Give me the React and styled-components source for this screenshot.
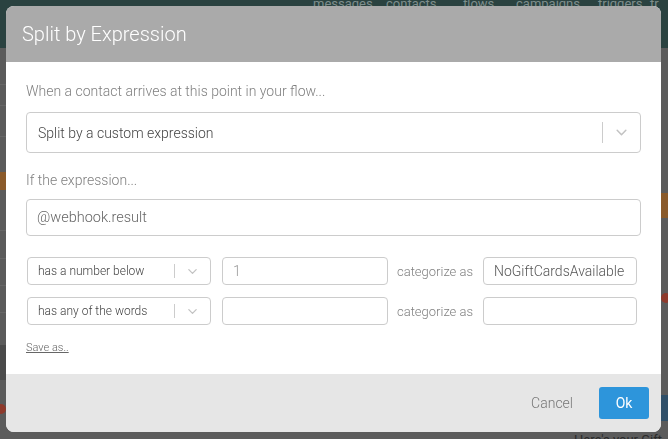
import React from 'react'
import styled, { createGlobalStyle } from 'styled-components'

const GlobalStyle = createGlobalStyle`
html, body{
    margin: 0;
    padding: 0;
    width: 668px;
    height: 439px;
    overflow: hidden;
    background: #5b5b5b;
    font-family: Roboto, "Liberation Sans", sans-serif;
}
*{
    box-sizing: border-box;
}
`

const rules = [
    { test: 'has a number below', value: '1', category: 'NoGiftCardsAvailable' },
    { test: 'has any of the words', value: '', category: '' },
]

const Chevron = ({ size = 12 }) => (
    <svg width={size} height={size} viewBox="0 0 12 12" fill="none">
        <path d="M2 4 L6 8 L10 4" stroke="#c2c2c2" strokeWidth="1.4" strokeLinecap="round" strokeLinejoin="round" />
    </svg>
)

const App = () => {
    return (
        <>
            <GlobalStyle />
            <Page>
                <TopBar>
                    <NavItem w={73}>messages</NavItem>
                    <NavItem w={77}>contacts</NavItem>
                    <NavItem w={53}>flows</NavItem>
                    <NavItem w={82}>campaigns</NavItem>
                    <NavItem w={52}>triggers</NavItem>
                    <NavItem w={20}>tr</NavItem>
                </TopBar>
                <Behind>
                    <SideColumn>
                        <Line top={36} />
                        <Line top={20} />
                        <Line top={30} />
                        <Tag top={35} h={18} color="#8a5a2a" />
                        <Line top={40} />
                        <Line top={27} />
                        <Line top={26} />
                        <Line top={26} />
                        <DarkBlock top={32} />
                        <Dot top={24} left={-4} />
                    </SideColumn>
                    <SideColumn>
                        <Tag top={145} color="#8a5a2a" h={25} />
                        <Dot top={75} left={0} />
                        <BlueBlock top={92} />
                    </SideColumn>
                </Behind>
                <FooterText>Here's your Gift</FooterText>
            </Page>

            <Overlay>
                <Modal>
                    <Header>
                        <Title>Split by Expression</Title>
                    </Header>
                    <Body>
                        <Label>When a contact arrives at this point in your flow...</Label>
                        <SelectBox>
                            <SelectValue>Split by a custom expression</SelectValue>
                            <Separator h={21} />
                            <ChevronWrap w={37}><Chevron size={13} /></ChevronWrap>
                        </SelectBox>
                        <Label top={19}>If the expression...</Label>
                        <ExpressionInput>@webhook.result</ExpressionInput>
                        <Rules>
                            {rules.map((rule, i) => (
                                <RuleRow key={i}>
                                    <RuleSelect>
                                        <RuleSelectValue>{rule.test}</RuleSelectValue>
                                        <Separator h={14} />
                                        <ChevronWrap w={35}><Chevron size={11} /></ChevronWrap>
                                    </RuleSelect>
                                    <ValueInput>{rule.value}</ValueInput>
                                    <CategorizeLabel>categorize as</CategorizeLabel>
                                    <CategoryInput>{rule.category}</CategoryInput>
                                </RuleRow>
                            ))}
                        </Rules>
                        <SaveAs>Save as..</SaveAs>
                    </Body>
                    <Footer>
                        <CancelButton>Cancel</CancelButton>
                        <OkButton>Ok</OkButton>
                    </Footer>
                </Modal>
            </Overlay>
        </>
    )
}

const Page = styled.div`
width: 668px;
height: 439px;
display: flex;
flex-direction: column;
background: #5b5b5b;
`
const TopBar = styled.div`
height: 48px;
background: #2a4240;
display: flex;
padding-left: 313px;
`
const NavItem = styled.div`
width: ${p => p.w}px;
flex-shrink: 0;
color: #7e8e8c;
font-size: 13px;
line-height: 13px;
margin-top: -3px;
`
const Behind = styled.div`
flex: 1;
display: flex;
justify-content: space-between;
`
const SideColumn = styled.div`
width: 7px;
display: flex;
flex-direction: column;
`
const Line = styled.div`
height: 1px;
margin-top: ${p => p.top}px;
background: #666666;
`
const Tag = styled.div`
height: ${p => p.h || 12}px;
margin-top: ${p => p.top}px;
background: ${p => p.color};
`
const DarkBlock = styled.div`
height: 35px;
margin-top: ${p => p.top}px;
background: #4a4a4a;
`
const Dot = styled.div`
width: 10px;
height: 10px;
border-radius: 50%;
margin-top: ${p => p.top}px;
margin-left: ${p => p.left}px;
background: #8e3a2c;
`
const BlueBlock = styled.div`
height: 26px;
margin-top: ${p => p.top}px;
background: #2f4f68;
`
const FooterText = styled.div`
position: absolute;
left: 574px;
top: 432px;
color: #2a2a2a;
font-size: 13px;
`
const Overlay = styled.div`
position: fixed;
inset: 0;
padding: 6px 7px 0 6px;
`
const Modal = styled.div`
width: 655px;
height: 426px;
border-radius: 8px;
overflow: hidden;
background: #ffffff;
display: flex;
flex-direction: column;
`
const Header = styled.div`
height: 56px;
flex-shrink: 0;
background: #aaaaaa;
display: flex;
align-items: center;
padding-left: 16px;
`
const Title = styled.div`
color: #ffffff;
font-size: 20px;
font-weight: 300;
`
const Body = styled.div`
flex: 1;
padding: 21px 20px 0 20px;
display: flex;
flex-direction: column;
`
const Label = styled.div`
color: #808080;
font-size: 14px;
font-weight: 300;
line-height: 16px;
margin-top: ${p => p.top || 0}px;
`
const SelectBox = styled.div`
margin-top: 13px;
height: 41px;
flex-shrink: 0;
border: 1px solid #cccccc;
border-radius: 4px;
display: flex;
align-items: center;
`
const SelectValue = styled.div`
flex: 1;
padding-left: 11px;
color: #444444;
font-size: 14px;
font-weight: 300;
`
const Separator = styled.div`
width: 1px;
height: ${p => p.h}px;
background: #cccccc;
`
const ChevronWrap = styled.div`
width: ${p => p.w}px;
display: flex;
justify-content: center;
align-items: center;
`
const ExpressionInput = styled.div`
margin-top: 11px;
height: 37px;
flex-shrink: 0;
border: 1px solid #cccccc;
border-radius: 4px;
display: flex;
align-items: center;
padding-left: 10px;
color: #666666;
font-size: 14.5px;
font-weight: 300;
`
const Rules = styled.div`
margin-top: 21px;
display: flex;
flex-direction: column;
gap: 12px;
padding-left: 1px;
`
const RuleRow = styled.div`
display: flex;
align-items: center;
height: 28px;
`
const field = `
height: 28px;
border: 1px solid #cccccc;
border-radius: 4px;
display: flex;
align-items: center;
font-size: 14px;
font-weight: 300;
color: #555555;
`
const RuleSelect = styled.div`
${field}
width: 184px;
`
const RuleSelectValue = styled.div`
flex: 1;
padding-left: 10px;
color: #444444;
font-size: 12px;
`
const ValueInput = styled.div`
${field}
width: 166px;
margin-left: 11px;
padding-left: 10px;
color: #999999;
`
const CategorizeLabel = styled.div`
width: 95px;
padding-left: 9px;
color: #808080;
font-size: 13px;
font-weight: 300;
`
const CategoryInput = styled.div`
${field}
width: 154px;
padding-left: 10px;
`
const SaveAs = styled.div`
margin-top: 16px;
color: #666666;
font-size: 11px;
line-height: 13px;
font-weight: 300;
text-decoration: underline;
`
const Footer = styled.div`
height: 58px;
flex-shrink: 0;
background: #e6e6e6;
display: flex;
align-items: center;
justify-content: flex-end;
padding-right: 12px;
gap: 26px;
`
const CancelButton = styled.div`
color: #777777;
font-size: 14px;
font-weight: 300;
`
const OkButton = styled.div`
width: 50px;
height: 32px;
border-radius: 3px;
background: #2d95db;
color: #ffffff;
font-size: 14px;
display: flex;
align-items: center;
justify-content: center;
`

export default App
